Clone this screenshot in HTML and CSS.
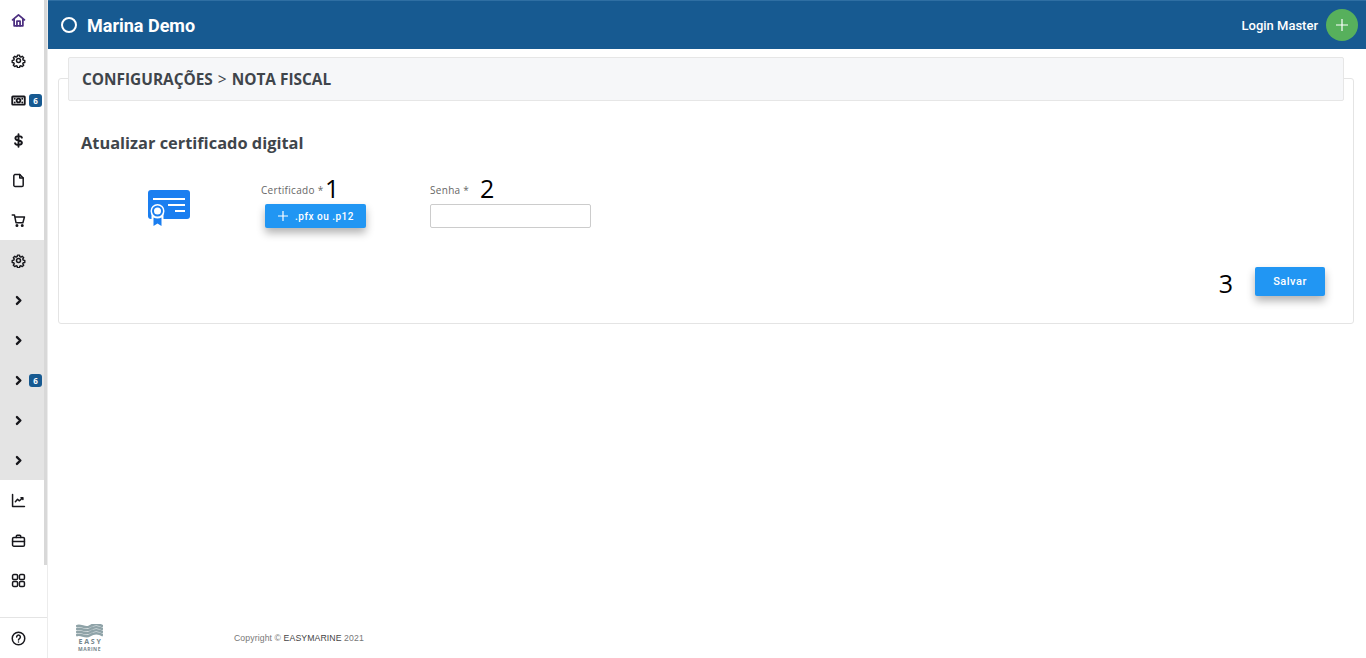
FILE: index.html
```html
<!DOCTYPE html>
<html lang="pt-BR">
<head>
    <meta charset="UTF-8">
    <meta name="viewport" content="width=device-width, initial-scale=1.0">
    <title>Marina Demo - Nota Fiscal</title>
    <link rel="stylesheet" href="styles.css">
</head>
<body>
    <aside class="sidebar">
        <nav class="side-list">
            <a class="side-item home">
                <svg viewBox="0 0 24 24" class="icon"><path d="M2.500 11 12 3l9.500 8M5 9.500V20.500h14V9.500"/><path d="M9.500 20.500V13h5v7.500"/></svg>
            </a>
            <a class="side-item">
                <svg viewBox="0 0 24 24" class="icon"><path d="M10.300 3h3.400l.5 2.600 1.900.8 2.200-1.500 2.400 2.400-1.500 2.200.8 1.900 2.600.5v3.400l-2.600.5-.8 1.900 1.500 2.200-2.400 2.400-2.200-1.500-1.900.8-.5 2.600h-3.400l-.5-2.600-1.900-.8-2.200 1.500-2.400-2.400 1.500-2.200-.8-1.900-2.600-.5v-3.400l2.600-.5.8-1.900-1.500-2.200 2.400-2.400 2.200 1.500 1.900-.8z" transform="translate(.600 .600) scale(.95)"/><circle cx="12" cy="12" r="3.200"/></svg>
            </a>
            <a class="side-item">
                <svg viewBox="0 0 24 24" class="icon icon-bold"><rect x="2" y="5.500" width="20" height="13" rx="1"/><circle cx="12" cy="12" r="3"/><path d="M6 9v.1M18 15v.1M6 15v.1M18 9v.1"/></svg>
                <span class="badge">6</span>
            </a>
            <a class="side-item">
                <svg viewBox="0 0 24 24" class="icon icon-bold"><path d="M17.500 7.500C17 5.500 14.500 5 12 5 9.500 5 7 6 7 8.300c0 4.700 10.500 2.700 10.500 7.400C17.500 18 14.500 19 12 19c-2.500 0-5-.7-5.500-2.700M12 2v20"/></svg>
            </a>
            <a class="side-item">
                <svg viewBox="0 0 24 24" class="icon"><path d="M6 2.500h8l5.500 5.500v11.500a2 2 0 0 1-2 2h-11a2 2 0 0 1-2-2v-15a2 2 0 0 1 2-2z"/><path d="M14 2.500V8h5.500"/></svg>
            </a>
            <a class="side-item">
                <svg viewBox="0 0 24 24" class="icon"><path d="M2 3h3.500l2.500 12.500h11l2.500-9H6.500"/><circle cx="9.500" cy="20" r="1.200"/><circle cx="18" cy="20" r="1.200"/></svg>
            </a>
            <div class="side-group">
                <a class="side-item">
                    <svg viewBox="0 0 24 24" class="icon"><path d="M10.300 3h3.400l.5 2.600 1.900.8 2.200-1.500 2.400 2.400-1.500 2.200.8 1.900 2.600.5v3.400l-2.600.5-.8 1.900 1.500 2.200-2.400 2.400-2.200-1.500-1.900.8-.5 2.600h-3.400l-.5-2.600-1.900-.8-2.200 1.500-2.400-2.400 1.500-2.200-.8-1.900-2.600-.5v-3.400l2.600-.5.8-1.900-1.500-2.200 2.400-2.400 2.200 1.500 1.900-.8z" transform="translate(.600 .600) scale(.95)"/><circle cx="12" cy="12" r="3.200"/></svg>
                </a>
                <a class="side-item"><svg viewBox="0 0 24 24" class="icon chevron"><path d="m9.500 6.500 5.500 5.500-5.500 5.500"/></svg></a>
                <a class="side-item"><svg viewBox="0 0 24 24" class="icon chevron"><path d="m9.500 6.500 5.500 5.500-5.500 5.500"/></svg></a>
                <a class="side-item"><svg viewBox="0 0 24 24" class="icon chevron"><path d="m9.500 6.500 5.500 5.500-5.500 5.500"/></svg><span class="badge">6</span></a>
                <a class="side-item"><svg viewBox="0 0 24 24" class="icon chevron"><path d="m9.500 6.500 5.500 5.500-5.500 5.500"/></svg></a>
                <a class="side-item"><svg viewBox="0 0 24 24" class="icon chevron"><path d="m9.500 6.500 5.500 5.500-5.500 5.500"/></svg></a>
            </div>
            <a class="side-item">
                <svg viewBox="0 0 24 24" class="icon"><path d="M2.500 2.500v19h19"/><path d="m7 14 3.500-4 3 2.500L19 7.500M16 7.500h3v3"/></svg>
            </a>
            <a class="side-item">
                <svg viewBox="0 0 24 24" class="icon"><rect x="2.500" y="7" width="19" height="14" rx="2"/><path d="M8.500 7V5A1.500 1.500 0 0 1 10 3.500h4A1.500 1.500 0 0 1 15.500 5v2M2.500 13.500h19"/></svg>
            </a>
            <a class="side-item">
                <svg viewBox="0 0 24 24" class="icon"><rect x="2.500" y="2.500" width="8" height="8" rx="2"/><rect x="13.500" y="2.500" width="8" height="8" rx="2"/><rect x="2.500" y="13.500" width="8" height="8" rx="2"/><rect x="13.500" y="13.500" width="8" height="8" rx="2"/></svg>
            </a>
        </nav>
        <div class="side-help">
            <svg viewBox="0 0 24 24" class="icon"><circle cx="12" cy="12" r="10"/><path d="M9 9.500a3 3 0 1 1 4.500 2.600c-1 .6-1.500 1.200-1.500 2.400M12 17.500v.1"/></svg>
        </div>
        <div class="side-scroll"></div>
    </aside>

    <div class="main">
        <header class="topbar">
            <div class="brand">
                <span class="brand-ring"></span>
                <span class="brand-name">Marina Demo</span>
            </div>
            <div class="user">
                <span class="user-name">Login Master</span>
                <span class="user-add">
                    <svg viewBox="0 0 24 24"><path d="M12 3v18M3 12h18"/></svg>
                </span>
            </div>
        </header>

        <main class="content">
            <section class="card">
                <div class="card-head">CONFIGURAÇÕES <span class="sep">&gt;</span> NOTA FISCAL</div>
                <h2 class="card-title">Atualizar certificado digital</h2>
                <div class="form-row">
                    <div class="cert-icon">
                        <svg viewBox="0 0 42 36" width="42" height="36">
                            <rect class="cert-body" x="0" y="0" width="42" height="29" rx="3"/>
                            <path class="cert-line" d="M5 9h32M20 15h17M27 21h10"/>
                            <path class="cert-cut" d="M3.500 24h12v6h-12z"/>
                            <circle class="cert-cut" cx="9.500" cy="21" r="7"/>
                            <circle class="cert-ring" cx="9.500" cy="21" r="4.500"/>
                            <path class="cert-body" d="M5.500 27.500c2.500 1.300 5.500 1.300 8 0V36l-4-2.500-4 2.500z"/>
                        </svg>
                    </div>
                    <div class="field field-cert">
                        <label class="field-label">Certificado *</label>
                        <button class="btn btn-file">
                            <svg viewBox="0 0 12 12" width="12" height="12"><path d="M6 1v10M1 6h10"/></svg>
                            <span>.pfx ou .p12</span>
                        </button>
                        <span class="mark mark-1">1</span>
                    </div>
                    <div class="field field-pass">
                        <label class="field-label" for="senha">Senha *</label>
                        <input class="field-input" id="senha" type="password">
                        <span class="mark mark-2">2</span>
                    </div>
                </div>
                <div class="form-actions">
                    <span class="mark mark-3">3</span>
                    <button class="btn btn-save">Salvar</button>
                </div>
            </section>
        </main>

        <footer class="footer">
            <div class="logo">
                <svg viewBox="0 0 27 14" width="27" height="14">
                    <path d="M0 2.500c4.500-3 9 3 13.500 0s9-3 13.500 0M0 5.500c4.500-3 9 3 13.500 0s9-3 13.500 0M0 8.500c4.500-3 9 3 13.500 0s9-3 13.500 0M0 11.500c4.500-3 9 3 13.500 0s9-3 13.500 0"/>
                </svg>
                <span class="logo-easy">EASY</span>
                <span class="logo-marine">MARINE</span>
            </div>
            <p class="copyright">Copyright © <span>EASYMARINE</span> 2021</p>
        </footer>
    </div>
</body>
</html>
```

FILE: styles.css
```css
* {
    box-sizing: border-box;
}
html, body {
    height: 100%;
}
body {
    margin: 0;
    display: flex;
    height: 658px;
    overflow: hidden;
    background-color: #fff;
    font-family: "Open Sans", sans-serif;
    color: #3f454b;
}
.sidebar {
    position: relative;
    width: 48px;
    flex-shrink: 0;
    display: flex;
    flex-direction: column;
    background-color: #fff;
    border-right: 1px solid #ececec;
}
.side-list {
    flex: 1;
}
.side-item {
    height: 40px;
    width: 44px;
    padding-left: 11px;
    display: flex;
    align-items: center;
    gap: 3px;
}
.side-group {
    width: 47px;
    background-color: #e4e4e4;
}
.icon {
    width: 15px;
    height: 15px;
    flex-shrink: 0;
    fill: none;
    stroke: #17171c;
    stroke-width: 2.400;
    stroke-linecap: round;
    stroke-linejoin: round;
}
.icon-bold {
    stroke-width: 3;
}
.home .icon {
    stroke: #4c2f80;
    stroke-width: 2.800;
}
.chevron {
    stroke-width: 3.800;
}
.badge {
    width: 13px;
    height: 13px;
    border-radius: 3px;
    background-color: #175a91;
    color: #fff;
    font-size: 8px;
    font-weight: 700;
    line-height: 13px;
    text-align: center;
}
.side-help {
    height: 41px;
    border-top: 1px solid #e4e4e4;
    padding-left: 11px;
    display: flex;
    align-items: center;
}
.side-scroll {
    position: absolute;
    top: 0;
    left: 44px;
    width: 3px;
    height: 565px;
    background-color: #d8d8d8;
}
.main {
    flex: 1;
    min-width: 0;
    display: flex;
    flex-direction: column;
}
.topbar {
    height: 49px;
    flex-shrink: 0;
    padding: 0 8px 0 13px;
    display: flex;
    align-items: center;
    justify-content: space-between;
    background-color: #175a91;
    border-top: 1px solid #2f6fa3;
    color: #fff;
}
.brand {
    display: flex;
    align-items: center;
    gap: 10px;
}
.brand-ring {
    width: 16px;
    height: 16px;
    border: 2px solid #fff;
    border-radius: 50%;
}
.brand-name {
    font-family: Roboto, sans-serif;
    font-size: 18px;
    font-weight: 700;
}
.user {
    display: flex;
    align-items: center;
    gap: 8px;
}
.user-name {
    font-family: Roboto, sans-serif;
    font-size: 13px;
    font-weight: 500;
}
.user-add {
    width: 32px;
    height: 32px;
    border-radius: 50%;
    background-color: #57b05c;
    display: flex;
    align-items: center;
    justify-content: center;
}
.user-add svg {
    width: 16px;
    height: 16px;
    fill: none;
    stroke: #fff;
    stroke-width: 1.800;
}
.content {
    flex: 1;
    padding: 29px 12px 0 10px;
}
.card {
    height: 246px;
    border: 1px solid #e4e4e4;
    border-radius: 3px;
    padding: 0 28px 0 9px;
}
.card-head {
    height: 44px;
    margin: -22px -19px 0 0;
    padding: 1px 0 0 13px;
    display: flex;
    align-items: center;
    gap: 5px;
    background-color: #f6f7f9;
    border: 1px solid #e6e6e6;
    border-radius: 2px;
    font-size: 15.400px;
    font-weight: 700;
    color: #3f454b;
    position: relative;
}
.sep {
    font-weight: 400;
}
.card-title {
    margin: 31px 0 0 13px;
    font-size: 16.400px;
    font-weight: 700;
    line-height: 22px;
    color: #3f454b;
}
.form-row {
    display: flex;
    margin: 24px 0 0 80px;
    height: 62px;
}
.cert-icon {
    width: 113px;
    padding-top: 12px;
    flex-shrink: 0;
}
.cert-body {
    fill: #1a7ef0;
}
.cert-cut {
    fill: #fff;
}
.cert-line {
    fill: none;
    stroke: #fff;
    stroke-width: 1.800;
}
.cert-ring {
    fill: #fff;
    stroke: #1a7ef0;
    stroke-width: 2;
}
.field {
    position: relative;
    display: flex;
    flex-direction: column;
}
.field-cert {
    width: 169px;
}
.field-pass {
    width: 161px;
}
.field-label {
    height: 29px;
    font-size: 10px;
    letter-spacing: .3px;
    line-height: 24px;
    color: #666;
}
.btn {
    border: none;
    border-radius: 2px;
    background-color: #2196f3;
    color: #fff;
    font-family: Roboto, sans-serif;
    font-weight: 500;
    letter-spacing: .5px;
    box-shadow: 0 5px 8px rgba(0, 0, 0, 0.3);
}
.btn-file {
    width: 101px;
    height: 24px;
    margin-left: 4px;
    margin-top: -3px;
    padding: 0;
    font-size: 10px;
    display: flex;
    align-items: center;
    justify-content: center;
    gap: 6px;
}
.btn-file svg {
    fill: none;
    stroke: #fff;
    stroke-width: 1.200;
}
.field-input {
    width: 161px;
    height: 24px;
    margin-top: -3px;
    border: 1px solid #ccc;
    border-radius: 2px;
    background-color: #fff;
}
.form-actions {
    display: flex;
    justify-content: flex-end;
    align-items: center;
    gap: 22px;
    margin-top: 27px;
}
.btn-save {
    width: 70px;
    height: 29px;
    font-size: 11px;
}
.mark {
    font-size: 25px;
    line-height: 24px;
    color: #000;
}
.mark-3 {
    margin-top: 3px;
}
.field .mark {
    position: absolute;
    top: -2px;
}
.mark-1 {
    left: 64px;
}
.mark-2 {
    left: 50px;
}
.footer {
    height: 41px;
    flex-shrink: 0;
    display: flex;
    align-items: center;
    padding-left: 28px;
}
.logo {
    width: 27px;
    display: flex;
    flex-direction: column;
    align-items: center;
    color: #75868c;
    font-weight: 700;
}
.logo svg {
    fill: none;
    stroke: #8fa3a8;
    stroke-width: 2.400;
}
.logo-easy {
    font-size: 7px;
    line-height: 8px;
    letter-spacing: 1.800px;
    margin-right: -2px;
}
.logo-marine {
    font-size: 5px;
    line-height: 6px;
    letter-spacing: .5px;
}
.copyright {
    margin: 0 0 0 131px;
    font-family: "Liberation Sans", sans-serif;
    font-size: 8.700px;
    letter-spacing: .1px;
    color: #777;
}
.copyright span {
    color: #444;
}
```
